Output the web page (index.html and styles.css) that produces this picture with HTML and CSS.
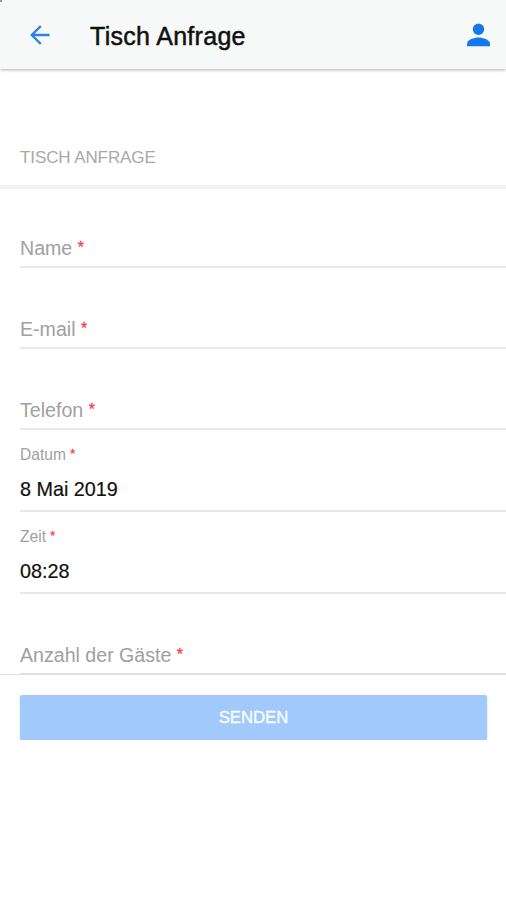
FILE: index.html
```html
<!DOCTYPE html>
<html lang="de">
<head>
  <meta charset="UTF-8">
  <meta name="viewport" content="width=device-width, initial-scale=1">
  <title>Tisch Anfrage</title>
  <link rel="stylesheet" href="styles.css">
</head>
<body>
  <header class="toolbar">
    <span class="corner"></span>
    <svg class="back-icon" viewBox="0 0 20 20" width="20" height="20">
      <path d="M19.6 10H1.8M10.8 1L1.8 10l9 9" fill="none" stroke="#2f80e0" stroke-width="2.4"/>
    </svg>
    <h1 class="toolbar-title">Tisch Anfrage</h1>
    <svg class="user-icon" viewBox="0 0 24 24" width="24" height="24">
      <circle cx="12.5" cy="6.3" r="5.7" fill="#1278ee"/>
      <path d="M1 23.3v-2.6c0-4 7.4-6.2 11.5-6.2s11.5 2.2 11.5 6.2v2.6z" fill="#1278ee"/>
    </svg>
  </header>

  <h2 class="list-header">TISCH ANFRAGE</h2>

  <form class="request-form">
    <div class="item">
      <span class="label">Name <span class="required">*</span></span>
    </div>
    <div class="item">
      <span class="label">E-mail <span class="required">*</span></span>
    </div>
    <div class="item">
      <span class="label">Telefon <span class="required">*</span></span>
    </div>
    <div class="item stacked">
      <span class="label">Datum <span class="required">*</span></span>
      <span class="value">8 Mai 2019</span>
    </div>
    <div class="item stacked">
      <span class="label">Zeit <span class="required">*</span></span>
      <span class="value">08:28</span>
    </div>
    <div class="item last">
      <span class="label">Anzahl der Gäste <span class="required">*</span></span>
    </div>
    <div class="form-footer">
      <button class="submit" type="button">SENDEN</button>
    </div>
  </form>
</body>
</html>
```
FILE: styles.css
```css
* {
  box-sizing: border-box;
}
body {
  margin: 0;
  background-color: #fff;
  color: #111;
  font-family: "Liberation Sans", Arial, sans-serif;
}
.toolbar {
  display: flex;
  align-items: center;
  height: 69px;
  padding: 0 16px 0 30px;
  background-color: #f7f9f9;
  box-shadow: 0 1px 3px rgba(0, 0, 0, 0.3);
}
/* dark spot in the top left corner of the screen */
.corner {
  position: absolute;
  top: 0;
  left: 0;
  width: 2px;
  height: 2px;
  background-color: #999;
}
.toolbar-title {
  flex: 1;
  margin: 3px 0 0 40px;
  font-size: 25px;
  font-weight: normal;
  line-height: 30px;
  letter-spacing: 0.3px;
  -webkit-text-stroke: 0.5px #111;
}
.list-header {
  height: 120px;
  margin: 0;
  padding: 79px 20px 0;
  border-bottom: 4px solid #f2f2f2;
  color: #a8a8a8;
  font-size: 17px;
  font-weight: normal;
  line-height: 20px;
  letter-spacing: -0.1px;
}
.item {
  display: flex;
  flex-direction: column;
  justify-content: flex-end;
  height: 81px;
  margin-left: 20px;
  padding-bottom: 6px;
  border-bottom: 2px solid #e8e8e8;
}
.item:first-child {
  height: 79px;
}
.label {
  color: #a0a0a0;
  font-size: 19.6px;
  line-height: 24px;
}
.required {
  color: #f0434f;
  font-size: 0.8em;
  vertical-align: 2px;
  line-height: 1;
  -webkit-text-stroke: 0.3px #f0434f;
}
.stacked {
  height: 82px;
  padding-bottom: 9px;
}
.stacked .label {
  margin-bottom: 12px;
  font-size: 15.6px;
  line-height: 20px;
}
.value {
  font-size: 19.8px;
  line-height: 24px;
  -webkit-text-stroke: 0.2px #111;
}
.last {
  border-bottom-color: #dedede;
}
.form-footer {
  margin-top: -1px;
  padding: 20px 19px 0 20px;
  border-top: 1px solid #dedede;
}
.submit {
  display: block;
  width: 100%;
  height: 45px;
  padding: 0;
  border: 0;
  border-radius: 2px;
  background-color: #a1c9fc;
  box-shadow: 0 1px 2px rgba(0, 0, 0, 0.2);
  color: #f6fcff;
  font-family: inherit;
  font-size: 16.7px;
  -webkit-text-stroke: 0.4px #f6fcff;
}
```
